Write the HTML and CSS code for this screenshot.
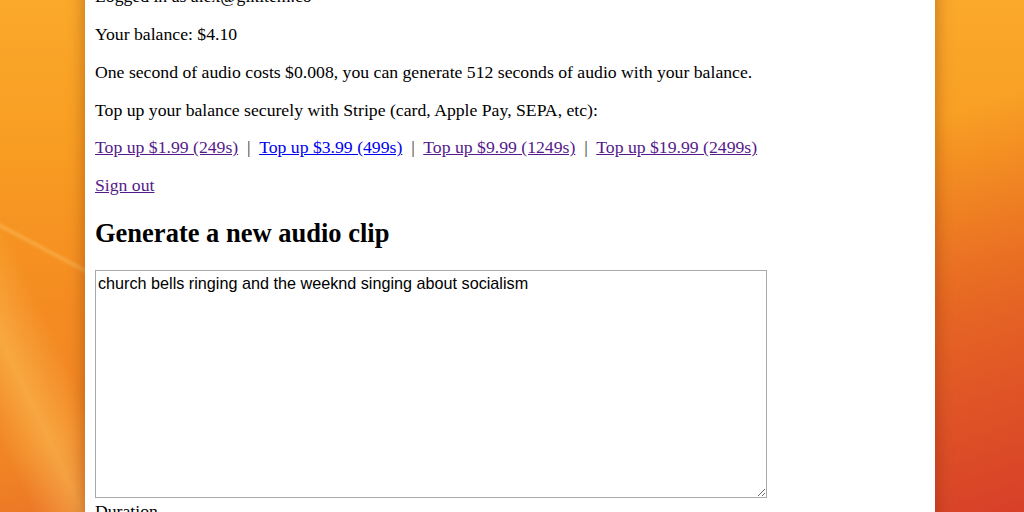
FILE: index.html
```html
<!DOCTYPE html>
<html>
<head>
<meta charset="utf-8">
<link rel="stylesheet" href="styles.css">
</head>
<body>
<div class="desktop">
  <main class="page">
    <p>Logged in as alex@gikitem.co</p>
    <p>Your balance: $4.10</p>
    <p>One second of audio costs $0.008, you can generate 512 seconds of audio with your balance.</p>
    <p>Top up your balance securely with Stripe (card, Apple Pay, SEPA, etc):</p>
    <p><a class="visited" href="#a">Top up $1.99 (249s)</a> <span class="sep">&nbsp;|&nbsp;</span> <a class="fresh" href="#b">Top up $3.99 (499s)</a> <span class="sep">&nbsp;|&nbsp;</span> <a class="visited" href="#c">Top up $9.99 (1249s)</a> <span class="sep">&nbsp;|&nbsp;</span> <a class="visited" href="#d">Top up $19.99 (2499s)</a></p>
    <p><a class="visited" href="#e">Sign out</a></p>
    <h2>Generate a new audio clip</h2>
    <textarea class="prompt">church bells ringing and the weeknd singing about socialism</textarea>
    <div class="label">Duration</div>
  </main>
</div>
</body>
</html>
```

FILE: styles.css
```css
html, body {
  margin: 0;
  padding: 0;
  height: 100%;
  overflow: hidden;
}

body {
  background:
    linear-gradient(64.7deg, rgba(255,220,120,0) 30px, rgba(255,214,110,0.4) 75px, rgba(255,220,120,0) 125px),
    linear-gradient(28deg, rgba(255,225,140,0) 249px, rgba(255,225,140,0.25) 253px, rgba(255,225,140,0) 257px),
    linear-gradient(160deg, rgba(214,58,40,0) 52%, rgba(216,64,38,0.5) 75%, rgba(214,60,40,0.95) 100%),
    linear-gradient(180deg, #faa92b 0%, #f89c22 30%, #f48b21 60%, #f08326 100%);
}

.desktop {
  height: 100%;
}

.page {
  display: flow-root;
  box-sizing: border-box;
  width: 850px;
  min-height: 600px;
  margin: -31.6px 0 0 85px;
  padding: 0 10px;
  background: #ffffff;
  box-shadow: 0 0 14px 2px rgba(110, 40, 0, 0.35);
  font-family: "Liberation Serif", "Times New Roman", serif;
  font-size: 17.7px;
  line-height: 20px;
  color: #000;
}

.page p {
  margin: 17.8px 0;
}

.page h2 {
  font-size: 26.5px;
  line-height: 30px;
  font-weight: bold;
  margin: 22.8px 0 22px;
}

a {
  text-decoration: underline;
}

a.visited {
  color: #551a8b;
}

a.fresh {
  color: #0000ee;
}

.sep {
  color: #333;
}

.prompt {
  display: block;
  box-sizing: border-box;
  width: 672px;
  height: 228px;
  margin: 0;
  padding: 3px 2px;
  border: 1px solid #a8a8a8;
  font-family: "Liberation Sans", Arial, sans-serif;
  font-size: 16.2px;
  line-height: 19px;
  color: #000;
  background: #fff;
}

.label {
  margin-top: 3px;
}
```
